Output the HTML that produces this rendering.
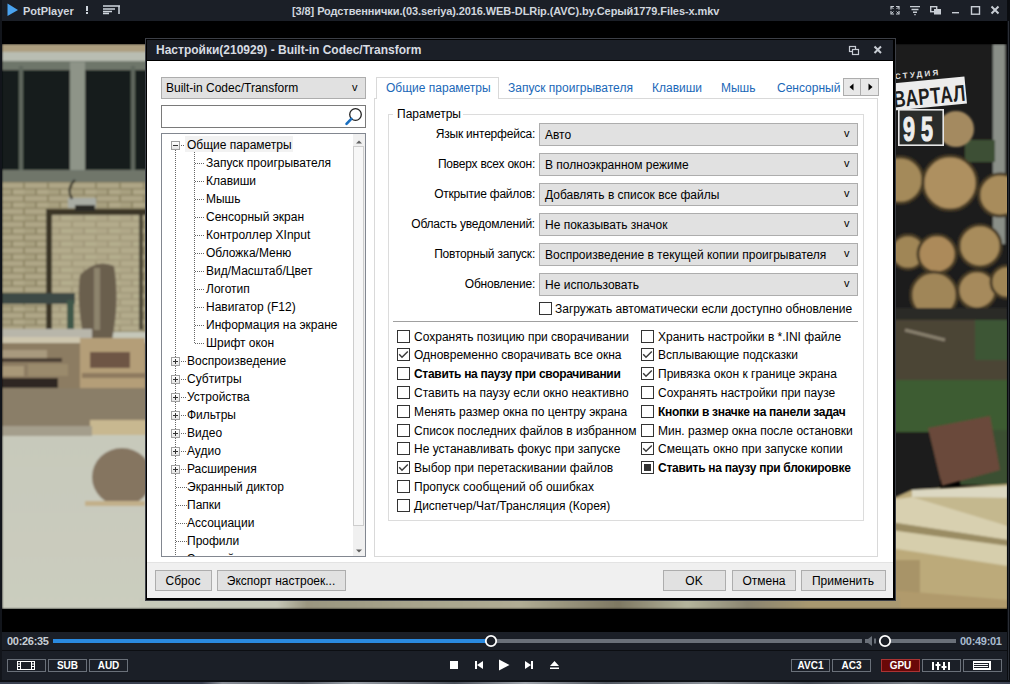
<!DOCTYPE html>
<html><head><meta charset="utf-8">
<style>
*{box-sizing:border-box;margin:0;padding:0}
html,body{width:1010px;height:684px;overflow:hidden;background:#000;font-family:"Liberation Sans",sans-serif;position:relative}
.a{position:absolute}
.t{position:absolute;white-space:nowrap;font-size:12px;color:#000;line-height:14px}
.cb{position:absolute;width:13px;height:13px;border:1px solid #333;background:#fff}
svg{display:block}
</style></head><body>

<svg class="a" style="left:0;top:0" width="1010" height="684" viewBox="0 0 1010 684">
<defs>
<filter id="bl" x="-5%" y="-5%" width="110%" height="110%"><feGaussianBlur stdDeviation="1.2"/></filter>
<pattern id="brick" width="24" height="13" patternUnits="userSpaceOnUse">
<rect width="24" height="13" fill="#8f8666"/>
<rect x="1" y="1" width="22" height="5" fill="#aea686"/>
<rect x="-11" y="7.5" width="22" height="5" fill="#a8a080"/>
<rect x="13" y="7.5" width="22" height="5" fill="#b0a888"/>
</pattern>
<linearGradient id="conc" x1="0" y1="0" x2="0" y2="1"><stop offset="0" stop-color="#bfc0b2"/><stop offset="1" stop-color="#cbcdbf"/></linearGradient>
<linearGradient id="bot" x1="0" y1="0" x2="1" y2="0"><stop offset="0" stop-color="#c8cabc"/><stop offset="0.18" stop-color="#c4c6b6"/><stop offset="0.22" stop-color="#9a9680"/><stop offset="0.36" stop-color="#a8a48c"/><stop offset="0.5" stop-color="#b0ac94"/><stop offset="0.63" stop-color="#7e7862"/><stop offset="0.72" stop-color="#b4b49c"/><stop offset="0.8" stop-color="#8a8470"/><stop offset="0.88" stop-color="#a89870"/><stop offset="1" stop-color="#a89870"/></linearGradient>
</defs>
<g filter="url(#bl)">
<!-- LEFT STRIP -->
<rect x="2" y="44" width="150" height="565" fill="url(#conc)"/>
<rect x="2" y="44" width="150" height="8" fill="#ad9f80"/>
<rect x="2" y="52" width="150" height="9" fill="#b9bdb2"/>
<rect x="2" y="61" width="150" height="9" fill="#6e766b"/>
<rect x="2" y="70" width="150" height="100" fill="#171e1b"/>
<rect x="19" y="66" width="4" height="106" fill="#5f675d"/>
<rect x="70" y="62" width="15" height="112" fill="#8e9488"/>
<rect x="131" y="66" width="4" height="106" fill="#5f675d"/>
<rect x="2" y="170" width="150" height="12" fill="#6f766a"/>
<rect x="2" y="182" width="150" height="150" fill="url(#brick)"/>
<rect x="52" y="215" width="88" height="115" fill="#bcb596" opacity="0.4"/>
<rect x="46" y="209" width="106" height="6" fill="#3a3428"/>
<rect x="46" y="209" width="6" height="125" fill="#3a3428"/>
<rect x="139" y="215" width="4" height="115" fill="#4a4436"/>
<rect x="68" y="198" width="28" height="10" fill="#a8aca4"/>
<rect x="75" y="205" width="20" height="6" fill="#2a2a26"/>
<path d="M72 199 Q66 188 75 180" stroke="#2a2a26" stroke-width="2" fill="none"/>
<rect x="2" y="293" width="73" height="11" fill="#3e4a44"/>
<rect x="67" y="300" width="7" height="30" fill="#40584a"/>
<path d="M80 275 Q96 258 114 266 Q120 300 112 340 L84 340 Q76 300 80 275Z" fill="#6a5e4e"/>
<rect x="94" y="268" width="6" height="62" fill="#9c947a" opacity="0.7"/>
<rect x="2" y="329" width="90" height="9" fill="#b8b6aa"/>
<rect x="2" y="337" width="78" height="6" fill="#cec6ae"/>
<rect x="2" y="343" width="150" height="45" fill="#8c7c62"/>
<rect x="2" y="350" width="45" height="9" fill="#a89a7e"/>
<rect x="28" y="364" width="40" height="12" fill="#9a8a6c"/>
<rect x="2" y="366" width="22" height="10" fill="#a89878"/>
<rect x="2" y="358" width="60" height="4" fill="#4a3c30"/>
<rect x="80" y="338" width="65" height="50" fill="#b49e78"/>
<rect x="90" y="352" width="40" height="16" fill="#6e5444"/>
<rect x="82" y="373" width="63" height="5" fill="#8e7a5e"/>
<rect x="2" y="378" width="56" height="10" fill="#2e2824"/>
<rect x="2" y="388" width="150" height="38" fill="#8a7e68"/>
<rect x="90" y="420" width="60" height="15" fill="#c8b890"/>
<rect x="2" y="426" width="90" height="10" fill="#a49e8c"/>
<ellipse cx="122" cy="477" rx="30" ry="29" fill="#857560"/>
<rect x="85" y="501" width="60" height="5" fill="#c2b08a"/>
<!-- RIGHT STRIP -->
<rect x="890" y="44" width="118" height="270" fill="#1b1e1a"/>
<rect x="993" y="44" width="12" height="200" fill="#8a8f88"/>
<rect x="965" y="140" width="30" height="22" fill="#3e5036"/>
<circle cx="900" cy="180" r="23" fill="#a48a5a" stroke="#4a3c28" stroke-width="3"/>
<circle cx="950" cy="183" r="27" fill="#ae9060" stroke="#4a3c28" stroke-width="3"/>
<circle cx="1000" cy="195" r="21" fill="#a88c5c" stroke="#4a3c28" stroke-width="3"/>
<circle cx="908" cy="252" r="17" fill="#a08656" stroke="#4a3c28" stroke-width="3"/>
<circle cx="937" cy="254" r="19" fill="#ac8a5a" stroke="#4a3c28" stroke-width="3"/>
<circle cx="980" cy="246" r="21" fill="#a88c5c" stroke="#4a3c28" stroke-width="3"/>
<circle cx="934" cy="295" r="23" fill="#a08658" stroke="#4a3c28" stroke-width="3"/>
<circle cx="977" cy="290" r="19" fill="#a68a5c" stroke="#4a3c28" stroke-width="3"/>
<circle cx="1007" cy="282" r="16" fill="#a08656" stroke="#4a3c28" stroke-width="3"/>
<rect x="890" y="308" width="118" height="12" fill="#2a2c28"/>
<rect x="890" y="320" width="118" height="62" fill="#4c4436"/>
<path d="M905 330 L945 340" stroke="#8a8270" stroke-width="3"/>
<rect x="975" y="320" width="33" height="40" fill="#3e5634"/>
<rect x="890" y="380" width="118" height="55" fill="#3e5c32"/>
<rect x="960" y="430" width="48" height="55" fill="#3a5030"/>
<rect x="890" y="432" width="50" height="68" fill="#1e1f1c"/>
<path d="M928 428 L990 416 L1000 470 L942 486Z" fill="#6a4a3a"/>
<path d="M890 500 L912 490 L1008 484 L1008 609 L890 609Z" fill="#bcaa7a"/>
<rect x="890" y="560" width="30" height="49" fill="#a89468"/>
<path d="M912 490 L1008 486 L1008 498 L912 497Z" fill="#dcd8c2"/>
<path d="M912 497 L1008 498 L1008 525 L912 512Z" fill="#c4b88e"/>
<path d="M890 500 L912 497 L1008 526 L1008 540 L890 522Z" fill="#d8d0b0"/>
<path d="M890 522 L1008 540 L1008 546 L890 530Z" fill="#9a8c64"/>
<path d="M890 530 L1008 546 L1008 566 L890 548Z" fill="#d6ceac"/>
<path d="M890 590 L1008 600 L1008 609 L890 609Z" fill="#b09a6c"/>
<!-- BOTTOM STRIP -->
<rect x="140" y="598" width="760" height="11" fill="url(#bot)"/>
</g>
<rect x="0" y="609" width="1010" height="23" fill="#000"/>
<rect x="0" y="21" width="1010" height="23" fill="#000"/>
<!-- logo -->
<circle cx="956" cy="129" r="18" fill="#a48a60" filter="url(#bl)"/>
<g transform="rotate(-5.5 930 95)">
<text x="897" y="76" font-family="Liberation Sans" font-weight="700" font-size="8" fill="#e4e4e4" letter-spacing="2.2">СТУДИЯ</text>
<rect x="880" y="80" width="86" height="27" fill="#ececec"/>
<text x="0" y="0" font-family="Liberation Sans" font-weight="700" font-size="23" fill="#1e1e1e" transform="translate(893 104) scale(0.74 1)" letter-spacing="1">ВАРТАЛ</text>
</g>
<rect x="898.8" y="109.8" width="44.4" height="35.4" fill="#2a2c2a" stroke="#e6e6e6" stroke-width="1.6"/>
<text x="0" y="0" font-family="Liberation Sans" font-weight="700" font-size="36" fill="#eee" stroke="#eee" stroke-width="1.2" transform="translate(903 141) scale(0.6 1)" letter-spacing="10">95</text>
</svg>

<div class="a" style="left:0px;top:0px;width:1010px;height:21px;background:#1b1f27;"></div>
<div class="a" style="left:0px;top:0px;width:2px;height:684px;background:#12151b;"></div>
<div class="a" style="left:1007px;top:0px;width:3px;height:684px;background:#0a0c10;"></div>
<div class="a" style="left:1008px;top:21px;width:1px;height:663px;background:#2a2e36;"></div>
<svg class="a" style="left:6px;top:2px" width="14" height="16" viewBox="0 0 14 16"><path d="M1.5 1.5 L12 8 L1.5 14Z" fill="#4aa3f0"/></svg>
<div class="t" style="left:23px;top:4px;font-size:11px;font-weight:700;color:#d0d6de">PotPlayer</div>
<div class="a" style="left:86px;top:6px;width:2px;height:5px;background:#d0d6de"></div>
<div class="a" style="left:86px;top:12px;width:2px;height:2px;background:#d0d6de"></div>
<svg class="a" style="left:102px;top:5px" width="19" height="10"><path d="M1 1H18M1 4H13M1 6.5H10M1 8.5H7M17 1V9" stroke="#d0d6de" stroke-width="1.5" fill="none"/></svg>
<div class="t" style="left:292px;top:4px;font-size:11px;font-weight:700;color:#d0d6de;letter-spacing:-0.09px">[3/8] Родственнички.(03.seriya).2016.WEB-DLRip.(AVC).by.Серый1779.Files-x.mkv</div>
<svg class="a" style="left:888px;top:4px" width="115" height="12" viewBox="0 0 115 12">
<g stroke="#c8cdd4" stroke-width="1.4" fill="none">
<path d="M3 5.5V2.5H6M8 2.5H11V5.5M3 7V10H6M8 10H11V7" stroke-width="1.2"/><path d="M3.5 3L5.5 5M10.5 3L8.5 5M3.5 9.5L5.5 7.5M10.5 9.5L8.5 7.5" stroke-width="1"/>
<path d="M22 2.6H32M23.5 5.5H30.5M25 8.2H29M26.3 10.6H27.7" stroke-width="1.4"/>
<rect x="42.7" y="2.7" width="6" height="5"/>
<path d="M64 8.7H71"/>
<rect x="83.5" y="2.7" width="8" height="7.5"/>
<path d="M103.5 2.5L110.5 9.5M110.5 2.5L103.5 9.5" stroke-width="2"/>
</g>
<rect x="46" y="5" width="7" height="5.5" fill="#c8cdd4"/>
</svg>

<div class="a" style="left:145px;top:38px;width:751px;height:563px;background:#000;border:1px solid #3c3f46;"></div>
<div class="a" style="left:147px;top:40px;width:746px;height:20px;background:#1b1f27;"></div>
<div class="a" style="left:147px;top:61px;width:746px;height:501px;background:#ffffff;"></div>
<div class="a" style="left:147px;top:562px;width:746px;height:36px;background:#f0f0f0;"></div>
<div class="a" style="left:147px;top:562px;width:746px;height:1px;background:#e3e3e3;"></div>
<div class="t" style="left:156px;top:43px;font-size:12px;line-height:14px;font-weight:700;color:#d8dce2;">Настройки(210929) - Built-in Codec/Transform</div>
<svg class="a" style="left:846px;top:44px" width="40" height="12" viewBox="0 0 40 12">
<g stroke="#c8cdd4" stroke-width="1.2" fill="none">
<rect x="3.5" y="2.5" width="6" height="5"/>
<rect x="6.5" y="5.5" width="6" height="5" fill="#1b1f27"/>
<path d="M28.5 2.5L35 9M35 2.5L28.5 9" stroke-width="2"/>
</g>
</svg>

<div class="a" style="left:161px;top:77px;width:205px;height:22px;background:#e1e1e1;border:1px solid #adadad;"></div>
<div class="t" style="left:166px;top:81px;font-size:12px;line-height:14px;font-weight:400;color:#000;">Built-in Codec/Transform</div>
<div class="t" style="left:352px;top:81px;font-size:11px;line-height:13px;font-weight:400;color:#000;">v</div>
<div class="a" style="left:161px;top:105px;width:205px;height:23px;background:#fff;border:1px solid #7a7a7a;"></div>
<svg class="a" style="left:344px;top:107px" width="20" height="19" viewBox="0 0 20 19">
<circle cx="11.5" cy="7.5" r="5.8" fill="none" stroke="#222" stroke-width="1.3"/>
<line x1="7.3" y1="11.8" x2="2.5" y2="16.8" stroke="#1a6fc0" stroke-width="2.6" stroke-linecap="round"/>
</svg>
<div class="a" style="left:161px;top:133px;width:205px;height:424px;background:#fff;border:1px solid #828790;"></div>
<div class="a" style="left:162px;top:134px;width:191px;height:422px;overflow:hidden">
<div class="a" style="left:13px;top:16px;width:1px;height:450px;background:repeating-linear-gradient(#666 0 1px,transparent 1px 2px)"></div>
<div class="a" style="left:32px;top:18px;width:1px;height:192px;background:repeating-linear-gradient(#666 0 1px,transparent 1px 2px)"></div>
<div class="a" style="left:9px;top:7px;width:9px;height:9px;border:1px solid #a0a0a0;background:linear-gradient(#fff,#e6e6e6)"></div>
<div class="a" style="left:11px;top:11px;width:5px;height:1px;background:#333"></div>
<div class="a" style="left:19px;top:11px;width:6px;height:1px;background:repeating-linear-gradient(90deg,#666 0 1px,transparent 1px 2px)"></div>
<div class="a" style="left:23px;top:2px;width:108px;height:16px;background:#f2f2f2"></div>
<div class="t" style="left:25px;top:4px">Общие параметры</div>
<div class="a" style="left:33px;top:29px;width:9px;height:1px;background:repeating-linear-gradient(90deg,#666 0 1px,transparent 1px 2px)"></div>
<div class="t" style="left:44px;top:22px">Запуск проигрывателя</div>
<div class="a" style="left:33px;top:47px;width:9px;height:1px;background:repeating-linear-gradient(90deg,#666 0 1px,transparent 1px 2px)"></div>
<div class="t" style="left:44px;top:40px">Клавиши</div>
<div class="a" style="left:33px;top:65px;width:9px;height:1px;background:repeating-linear-gradient(90deg,#666 0 1px,transparent 1px 2px)"></div>
<div class="t" style="left:44px;top:58px">Мышь</div>
<div class="a" style="left:33px;top:83px;width:9px;height:1px;background:repeating-linear-gradient(90deg,#666 0 1px,transparent 1px 2px)"></div>
<div class="t" style="left:44px;top:76px">Сенсорный экран</div>
<div class="a" style="left:33px;top:101px;width:9px;height:1px;background:repeating-linear-gradient(90deg,#666 0 1px,transparent 1px 2px)"></div>
<div class="t" style="left:44px;top:94px">Контроллер XInput</div>
<div class="a" style="left:33px;top:119px;width:9px;height:1px;background:repeating-linear-gradient(90deg,#666 0 1px,transparent 1px 2px)"></div>
<div class="t" style="left:44px;top:112px">Обложка/Меню</div>
<div class="a" style="left:33px;top:137px;width:9px;height:1px;background:repeating-linear-gradient(90deg,#666 0 1px,transparent 1px 2px)"></div>
<div class="t" style="left:44px;top:130px">Вид/Масштаб/Цвет</div>
<div class="a" style="left:33px;top:155px;width:9px;height:1px;background:repeating-linear-gradient(90deg,#666 0 1px,transparent 1px 2px)"></div>
<div class="t" style="left:44px;top:148px">Логотип</div>
<div class="a" style="left:33px;top:173px;width:9px;height:1px;background:repeating-linear-gradient(90deg,#666 0 1px,transparent 1px 2px)"></div>
<div class="t" style="left:44px;top:166px">Навигатор (F12)</div>
<div class="a" style="left:33px;top:191px;width:9px;height:1px;background:repeating-linear-gradient(90deg,#666 0 1px,transparent 1px 2px)"></div>
<div class="t" style="left:44px;top:184px">Информация на экране</div>
<div class="a" style="left:33px;top:209px;width:9px;height:1px;background:repeating-linear-gradient(90deg,#666 0 1px,transparent 1px 2px)"></div>
<div class="t" style="left:44px;top:202px">Шрифт окон</div>
<div class="a" style="left:9px;top:223px;width:9px;height:9px;border:1px solid #a0a0a0;background:linear-gradient(#fff,#e6e6e6)"></div>
<div class="a" style="left:11px;top:227px;width:5px;height:1px;background:#333"></div>
<div class="a" style="left:13px;top:225px;width:1px;height:5px;background:#333"></div>
<div class="a" style="left:19px;top:227px;width:6px;height:1px;background:repeating-linear-gradient(90deg,#666 0 1px,transparent 1px 2px)"></div>
<div class="t" style="left:25px;top:220px">Воспроизведение</div>
<div class="a" style="left:9px;top:241px;width:9px;height:9px;border:1px solid #a0a0a0;background:linear-gradient(#fff,#e6e6e6)"></div>
<div class="a" style="left:11px;top:245px;width:5px;height:1px;background:#333"></div>
<div class="a" style="left:13px;top:243px;width:1px;height:5px;background:#333"></div>
<div class="a" style="left:19px;top:245px;width:6px;height:1px;background:repeating-linear-gradient(90deg,#666 0 1px,transparent 1px 2px)"></div>
<div class="t" style="left:25px;top:238px">Субтитры</div>
<div class="a" style="left:9px;top:259px;width:9px;height:9px;border:1px solid #a0a0a0;background:linear-gradient(#fff,#e6e6e6)"></div>
<div class="a" style="left:11px;top:263px;width:5px;height:1px;background:#333"></div>
<div class="a" style="left:13px;top:261px;width:1px;height:5px;background:#333"></div>
<div class="a" style="left:19px;top:263px;width:6px;height:1px;background:repeating-linear-gradient(90deg,#666 0 1px,transparent 1px 2px)"></div>
<div class="t" style="left:25px;top:256px">Устройства</div>
<div class="a" style="left:9px;top:277px;width:9px;height:9px;border:1px solid #a0a0a0;background:linear-gradient(#fff,#e6e6e6)"></div>
<div class="a" style="left:11px;top:281px;width:5px;height:1px;background:#333"></div>
<div class="a" style="left:13px;top:279px;width:1px;height:5px;background:#333"></div>
<div class="a" style="left:19px;top:281px;width:6px;height:1px;background:repeating-linear-gradient(90deg,#666 0 1px,transparent 1px 2px)"></div>
<div class="t" style="left:25px;top:274px">Фильтры</div>
<div class="a" style="left:9px;top:295px;width:9px;height:9px;border:1px solid #a0a0a0;background:linear-gradient(#fff,#e6e6e6)"></div>
<div class="a" style="left:11px;top:299px;width:5px;height:1px;background:#333"></div>
<div class="a" style="left:13px;top:297px;width:1px;height:5px;background:#333"></div>
<div class="a" style="left:19px;top:299px;width:6px;height:1px;background:repeating-linear-gradient(90deg,#666 0 1px,transparent 1px 2px)"></div>
<div class="t" style="left:25px;top:292px">Видео</div>
<div class="a" style="left:9px;top:313px;width:9px;height:9px;border:1px solid #a0a0a0;background:linear-gradient(#fff,#e6e6e6)"></div>
<div class="a" style="left:11px;top:317px;width:5px;height:1px;background:#333"></div>
<div class="a" style="left:13px;top:315px;width:1px;height:5px;background:#333"></div>
<div class="a" style="left:19px;top:317px;width:6px;height:1px;background:repeating-linear-gradient(90deg,#666 0 1px,transparent 1px 2px)"></div>
<div class="t" style="left:25px;top:310px">Аудио</div>
<div class="a" style="left:9px;top:331px;width:9px;height:9px;border:1px solid #a0a0a0;background:linear-gradient(#fff,#e6e6e6)"></div>
<div class="a" style="left:11px;top:335px;width:5px;height:1px;background:#333"></div>
<div class="a" style="left:13px;top:333px;width:1px;height:5px;background:#333"></div>
<div class="a" style="left:19px;top:335px;width:6px;height:1px;background:repeating-linear-gradient(90deg,#666 0 1px,transparent 1px 2px)"></div>
<div class="t" style="left:25px;top:328px">Расширения</div>
<div class="a" style="left:14px;top:353px;width:11px;height:1px;background:repeating-linear-gradient(90deg,#666 0 1px,transparent 1px 2px)"></div>
<div class="t" style="left:25px;top:346px">Экранный диктор</div>
<div class="a" style="left:14px;top:371px;width:11px;height:1px;background:repeating-linear-gradient(90deg,#666 0 1px,transparent 1px 2px)"></div>
<div class="t" style="left:25px;top:364px">Папки</div>
<div class="a" style="left:14px;top:389px;width:11px;height:1px;background:repeating-linear-gradient(90deg,#666 0 1px,transparent 1px 2px)"></div>
<div class="t" style="left:25px;top:382px">Ассоциации</div>
<div class="a" style="left:14px;top:407px;width:11px;height:1px;background:repeating-linear-gradient(90deg,#666 0 1px,transparent 1px 2px)"></div>
<div class="t" style="left:25px;top:400px">Профили</div>
<div class="a" style="left:14px;top:425px;width:11px;height:1px;background:repeating-linear-gradient(90deg,#666 0 1px,transparent 1px 2px)"></div>
<div class="t" style="left:25px;top:418px">Эквалайзер</div>
</div>
<div class="a" style="left:353px;top:134px;width:12px;height:422px;background:#f0f0f0"></div>
<div class="a" style="left:353px;top:146px;width:11px;height:380px;background:#f7f7f7;border:1px solid #cdcdcd"></div>
<svg class="a" style="left:353px;top:135px" width="12" height="421"><path d="M3 8.5L6 5.5L9 8.5Z" fill="#606060"/><path d="M3 414.5L6 417.5L9 414.5Z" fill="#606060"/></svg>
<div class="a" style="left:374px;top:98px;width:504px;height:459px;background:#fff;border:1px solid #d9d9d9;"></div>
<div class="a" style="left:376px;top:77px;width:123px;height:22px;background:#fff;border:1px solid #d9d9d9;border-bottom:none;"></div>
<div class="t" style="left:386px;top:81px;font-size:12px;line-height:14px;font-weight:400;color:#1a68b8;">Общие параметры</div>
<div class="t" style="left:508px;top:81px;font-size:12px;line-height:14px;font-weight:400;color:#1a68b8;">Запуск проигрывателя</div>
<div class="t" style="left:652px;top:81px;font-size:12px;line-height:14px;font-weight:400;color:#1a68b8;">Клавиши</div>
<div class="t" style="left:721px;top:81px;font-size:12px;line-height:14px;font-weight:400;color:#1a68b8;">Мышь</div>
<div class="t" style="left:777px;top:81px;font-size:12px;line-height:14px;font-weight:400;color:#1a68b8;">Сенсорный</div>
<div class="a" style="left:843px;top:78px;width:18px;height:18px;background:#e8e8e8;border:1px solid #adadad;"></div>
<div class="a" style="left:860px;top:78px;width:19px;height:18px;background:#e8e8e8;border:1px solid #adadad;"></div>
<svg class="a" style="left:843px;top:78px" width="36" height="18"><path d="M10.5 5.5 L6.5 9 L10.5 12.5Z" fill="#000"/><path d="M25.5 5.5 L29.5 9 L25.5 12.5Z" fill="#000"/></svg>
<div class="a" style="left:388px;top:114px;width:476px;height:407px;background:transparent;border:1px solid #dcdcdc;"></div>
<div class="a" style="left:393px;top:108px;width:70px;height:12px;background:#fff;"></div>
<div class="t" style="left:397px;top:107px;font-size:12px;line-height:14px;font-weight:400;color:#000;">Параметры</div>
<div class="t" style="right:475px;top:127px;font-size:12px;line-height:14px;font-weight:400;color:#000;letter-spacing:-0.22px">Язык интерфейса:</div>
<div class="a" style="left:539px;top:123px;width:319px;height:23px;background:#e1e1e1;border:1px solid #adadad;"></div>
<div class="t" style="left:545px;top:128px;font-size:12px;line-height:14px;font-weight:400;color:#000;">Авто</div>
<div class="t" style="left:844px;top:127px;font-size:11px;line-height:13px;font-weight:400;color:#000;">v</div>
<div class="t" style="right:475px;top:157px;font-size:12px;line-height:14px;font-weight:400;color:#000;letter-spacing:-0.22px">Поверх всех окон:</div>
<div class="a" style="left:539px;top:153px;width:319px;height:23px;background:#e1e1e1;border:1px solid #adadad;"></div>
<div class="t" style="left:545px;top:158px;font-size:12px;line-height:14px;font-weight:400;color:#000;">В полноэкранном режиме</div>
<div class="t" style="left:844px;top:157px;font-size:11px;line-height:13px;font-weight:400;color:#000;">v</div>
<div class="t" style="right:475px;top:187px;font-size:12px;line-height:14px;font-weight:400;color:#000;letter-spacing:-0.22px">Открытие файлов:</div>
<div class="a" style="left:539px;top:183px;width:319px;height:23px;background:#e1e1e1;border:1px solid #adadad;"></div>
<div class="t" style="left:545px;top:188px;font-size:12px;line-height:14px;font-weight:400;color:#000;">Добавлять в список все файлы</div>
<div class="t" style="left:844px;top:187px;font-size:11px;line-height:13px;font-weight:400;color:#000;">v</div>
<div class="t" style="right:475px;top:217px;font-size:12px;line-height:14px;font-weight:400;color:#000;letter-spacing:-0.22px">Область уведомлений:</div>
<div class="a" style="left:539px;top:213px;width:319px;height:23px;background:#e1e1e1;border:1px solid #adadad;"></div>
<div class="t" style="left:545px;top:218px;font-size:12px;line-height:14px;font-weight:400;color:#000;">Не показывать значок</div>
<div class="t" style="left:844px;top:217px;font-size:11px;line-height:13px;font-weight:400;color:#000;">v</div>
<div class="t" style="right:475px;top:247px;font-size:12px;line-height:14px;font-weight:400;color:#000;letter-spacing:-0.22px">Повторный запуск:</div>
<div class="a" style="left:539px;top:243px;width:319px;height:23px;background:#e1e1e1;border:1px solid #adadad;"></div>
<div class="t" style="left:545px;top:248px;font-size:12px;line-height:14px;font-weight:400;color:#000;">Воспроизведение в текущей копии проигрывателя</div>
<div class="t" style="left:844px;top:247px;font-size:11px;line-height:13px;font-weight:400;color:#000;">v</div>
<div class="t" style="right:475px;top:277px;font-size:12px;line-height:14px;font-weight:400;color:#000;letter-spacing:-0.22px">Обновление:</div>
<div class="a" style="left:539px;top:273px;width:319px;height:23px;background:#e1e1e1;border:1px solid #adadad;"></div>
<div class="t" style="left:545px;top:278px;font-size:12px;line-height:14px;font-weight:400;color:#000;">Не использовать</div>
<div class="t" style="left:844px;top:277px;font-size:11px;line-height:13px;font-weight:400;color:#000;">v</div>
<div class="cb" style="left:539px;top:302px"></div>
<div class="t" style="left:555px;top:302px;font-size:12px;line-height:14px;font-weight:400;color:#000;">Загружать автоматически если доступно обновление</div>
<div class="a" style="left:393px;top:321px;width:465px;height:1px;background:#a0a0a0;"></div>
<div class="cb" style="left:397px;top:330px"></div>
<div class="t" style="left:414px;top:330px;font-size:12px;line-height:14px;font-weight:400;color:#000;">Сохранять позицию при сворачивании</div>
<div class="cb" style="left:397px;top:348px"></div>
<svg class="a" style="left:397px;top:348px" width="13" height="13"><path d="M2.2 6.3 L5 9.3 L10.8 3.4" fill="none" stroke="#3a3a3a" stroke-width="1.4"/></svg>
<div class="t" style="left:414px;top:348px;font-size:12px;line-height:14px;font-weight:400;color:#000;">Одновременно сворачивать все окна</div>
<div class="cb" style="left:397px;top:367px"></div>
<div class="t" style="left:414px;top:367px;font-size:12px;line-height:14px;font-weight:700;color:#000;letter-spacing:-0.3px">Ставить на паузу при сворачивании</div>
<div class="cb" style="left:397px;top:386px"></div>
<div class="t" style="left:414px;top:386px;font-size:12px;line-height:14px;font-weight:400;color:#000;">Ставить на паузу если окно неактивно</div>
<div class="cb" style="left:397px;top:405px"></div>
<div class="t" style="left:414px;top:405px;font-size:12px;line-height:14px;font-weight:400;color:#000;">Менять размер окна по центру экрана</div>
<div class="cb" style="left:397px;top:424px"></div>
<div class="t" style="left:414px;top:424px;font-size:12px;line-height:14px;font-weight:400;color:#000;">Список последних файлов в избранном</div>
<div class="cb" style="left:397px;top:442px"></div>
<div class="t" style="left:414px;top:442px;font-size:12px;line-height:14px;font-weight:400;color:#000;">Не устанавливать фокус при запуске</div>
<div class="cb" style="left:397px;top:461px"></div>
<svg class="a" style="left:397px;top:461px" width="13" height="13"><path d="M2.2 6.3 L5 9.3 L10.8 3.4" fill="none" stroke="#3a3a3a" stroke-width="1.4"/></svg>
<div class="t" style="left:414px;top:461px;font-size:12px;line-height:14px;font-weight:400;color:#000;">Выбор при перетаскивании файлов</div>
<div class="cb" style="left:397px;top:480px"></div>
<div class="t" style="left:414px;top:480px;font-size:12px;line-height:14px;font-weight:400;color:#000;">Пропуск сообщений об ошибках</div>
<div class="cb" style="left:397px;top:499px"></div>
<div class="t" style="left:414px;top:499px;font-size:12px;line-height:14px;font-weight:400;color:#000;">Диспетчер/Чат/Трансляция (Корея)</div>
<div class="cb" style="left:641px;top:330px"></div>
<div class="t" style="left:658px;top:330px;font-size:12px;line-height:14px;font-weight:400;color:#000;">Хранить настройки в *.INI файле</div>
<div class="cb" style="left:641px;top:348px"></div>
<svg class="a" style="left:641px;top:348px" width="13" height="13"><path d="M2.2 6.3 L5 9.3 L10.8 3.4" fill="none" stroke="#3a3a3a" stroke-width="1.4"/></svg>
<div class="t" style="left:658px;top:348px;font-size:12px;line-height:14px;font-weight:400;color:#000;">Всплывающие подсказки</div>
<div class="cb" style="left:641px;top:367px"></div>
<svg class="a" style="left:641px;top:367px" width="13" height="13"><path d="M2.2 6.3 L5 9.3 L10.8 3.4" fill="none" stroke="#3a3a3a" stroke-width="1.4"/></svg>
<div class="t" style="left:658px;top:367px;font-size:12px;line-height:14px;font-weight:400;color:#000;">Привязка окон к границе экрана</div>
<div class="cb" style="left:641px;top:386px"></div>
<div class="t" style="left:658px;top:386px;font-size:12px;line-height:14px;font-weight:400;color:#000;">Сохранять настройки при паузе</div>
<div class="cb" style="left:641px;top:405px"></div>
<div class="t" style="left:658px;top:405px;font-size:12px;line-height:14px;font-weight:700;color:#000;letter-spacing:-0.28px">Кнопки в значке на панели задач</div>
<div class="cb" style="left:641px;top:424px"></div>
<div class="t" style="left:658px;top:424px;font-size:12px;line-height:14px;font-weight:400;color:#000;">Мин. размер окна после остановки</div>
<div class="cb" style="left:641px;top:442px"></div>
<svg class="a" style="left:641px;top:442px" width="13" height="13"><path d="M2.2 6.3 L5 9.3 L10.8 3.4" fill="none" stroke="#3a3a3a" stroke-width="1.4"/></svg>
<div class="t" style="left:658px;top:442px;font-size:12px;line-height:14px;font-weight:400;color:#000;">Смещать окно при запуске копии</div>
<div class="cb" style="left:641px;top:461px"></div>
<div class="a" style="left:644px;top:464px;width:7px;height:7px;background:#333"></div>
<div class="t" style="left:658px;top:461px;font-size:12px;line-height:14px;font-weight:700;color:#000;letter-spacing:-0.28px">Ставить на паузу при блокировке</div>
<div class="a" style="left:155px;top:570px;width:57px;height:21px;background:#e1e1e1;border:1px solid #adadad;"></div>
<div class="t" style="left:-17px;width:400px;text-align:center;top:574px;font-size:12px;line-height:14px;font-weight:400;color:#000;">Сброс</div>
<div class="a" style="left:217px;top:570px;width:129px;height:21px;background:#e1e1e1;border:1px solid #adadad;"></div>
<div class="t" style="left:81px;width:400px;text-align:center;top:574px;font-size:12px;line-height:14px;font-weight:400;color:#000;">Экспорт настроек...</div>
<div class="a" style="left:663px;top:570px;width:63px;height:21px;background:#e1e1e1;border:1px solid #adadad;"></div>
<div class="t" style="left:494px;width:400px;text-align:center;top:574px;font-size:12px;line-height:14px;font-weight:400;color:#000;">OK</div>
<div class="a" style="left:732px;top:570px;width:64px;height:21px;background:#e1e1e1;border:1px solid #adadad;"></div>
<div class="t" style="left:564px;width:400px;text-align:center;top:574px;font-size:12px;line-height:14px;font-weight:400;color:#000;">Отмена</div>
<div class="a" style="left:801px;top:570px;width:85px;height:21px;background:#e1e1e1;border:1px solid #adadad;"></div>
<div class="t" style="left:643px;width:400px;text-align:center;top:574px;font-size:12px;line-height:14px;font-weight:400;color:#000;">Применить</div>
<div class="a" style="left:2px;top:632px;width:1005px;height:18px;background:#1b1f27"></div>
<div class="a" style="left:2px;top:650px;width:1005px;height:1px;background:#0c0e12"></div>
<div class="a" style="left:2px;top:651px;width:1005px;height:29px;background:#1b1f27"></div>
<div class="a" style="left:0px;top:680px;width:1010px;height:4px;background:#10131a"></div>
<div class="t" style="left:7px;top:634px;font-size:11px;font-weight:700;color:#c8ced6;letter-spacing:-0.3px">00:26:35</div>
<div class="a" style="left:53px;top:639px;width:438px;height:4px;background:#2a8ae0"></div>
<div class="a" style="left:491px;top:639px;width:371px;height:4px;background:#6a7079"></div>
<div class="a" style="left:885px;top:639px;width:71px;height:4px;background:#6a7079"></div>
<svg class="a" style="left:484px;top:634px" width="14" height="14"><circle cx="7" cy="7" r="5.2" fill="#1b1f27" stroke="#fff" stroke-width="1.8"/></svg>
<svg class="a" style="left:878px;top:634px" width="14" height="14"><circle cx="7" cy="7" r="5.2" fill="#1b1f27" stroke="#fff" stroke-width="1.8"/></svg>
<svg class="a" style="left:865px;top:636px" width="12" height="10"><path d="M0 3H3L7 0V10L3 7H0Z" fill="#6a7079"/><rect x="9" y="2.5" width="2" height="5" fill="#6a7079"/></svg>
<div class="t" style="left:960px;top:634px;font-size:11px;font-weight:700;color:#a9bccf;letter-spacing:-0.3px">00:49:01</div>
<!-- left buttons -->
<div class="a" style="left:7px;top:659px;width:39px;height:13px;border:1px solid #6a7079"></div>
<svg class="a" style="left:17px;top:661px" width="19" height="9"><rect x="0.5" y="0.5" width="17" height="8" fill="none" stroke="#fff"/><path d="M3.5 0.5V8.5M14.5 0.5V8.5M0.5 3H3.5M0.5 5.5H3.5M14.5 3H17.5M14.5 5.5H17.5" stroke="#fff"/></svg>
<div class="a" style="left:48px;top:659px;width:39px;height:13px;border:1px solid #6a7079"></div>
<div class="t" style="left:48px;top:659px;width:39px;text-align:center;font-size:10px;font-weight:700;color:#fff;line-height:13px">SUB</div>
<div class="a" style="left:89px;top:659px;width:39px;height:13px;border:1px solid #6a7079"></div>
<div class="t" style="left:89px;top:659px;width:39px;text-align:center;font-size:10px;font-weight:700;color:#fff;line-height:13px">AUD</div>
<!-- transport -->
<svg class="a" style="left:445px;top:656px" width="120" height="20">
<rect x="5" y="5" width="8" height="8" fill="#fff"/>
<path d="M30 5H32V13H30Z M32 9L38 5V13Z" fill="#fff"/>
<path d="M54 3.5L64.5 9L54 14.5Z" fill="#fff"/>
<path d="M80 5L86 9L80 13Z M86 5H88V13H86Z" fill="#fff"/>
<path d="M105 10L109.5 5L114 10Z M105 11.5H114V13H105Z" fill="#fff"/>
</svg>
<!-- right buttons -->
<div class="a" style="left:791px;top:659px;width:39px;height:13px;border:1px solid #6a7079"></div>
<div class="t" style="left:791px;top:659px;width:39px;text-align:center;font-size:10px;font-weight:700;color:#fff;line-height:13px">AVC1</div>
<div class="a" style="left:832px;top:659px;width:39px;height:13px;border:1px solid #6a7079"></div>
<div class="t" style="left:832px;top:659px;width:39px;text-align:center;font-size:10px;font-weight:700;color:#fff;line-height:13px">AC3</div>
<div class="a" style="left:881px;top:659px;width:39px;height:13px;border:1px solid #a33;background:#6a0808"></div>
<div class="t" style="left:881px;top:659px;width:39px;text-align:center;font-size:10px;font-weight:700;color:#fff;line-height:13px">GPU</div>
<div class="a" style="left:922px;top:659px;width:39px;height:13px;border:1px solid #6a7079"></div>
<svg class="a" style="left:932px;top:661px" width="19" height="9"><rect x="0" y="1" width="2" height="8" fill="#fff"/><rect x="16" y="1" width="2" height="8" fill="#fff"/><rect x="5" y="1" width="2" height="8" fill="#fff"/><rect x="11" y="1" width="2" height="8" fill="#fff"/><rect x="3.5" y="3" width="5" height="2" fill="#fff"/><rect x="9.5" y="5" width="5" height="2" fill="#fff"/></svg>
<div class="a" style="left:963px;top:659px;width:39px;height:13px;border:1px solid #6a7079"></div>
<svg class="a" style="left:973px;top:661px" width="19" height="9"><rect x="0" y="0" width="18" height="2" fill="#fff"/><rect x="16" y="0" width="2" height="9" fill="#fff"/><rect x="0" y="0" width="1" height="9" fill="#fff"/><rect x="0" y="3" width="15" height="1" fill="#fff"/><rect x="0" y="5" width="15" height="1" fill="#fff"/><rect x="0" y="7" width="18" height="2" fill="#fff"/></svg>
<div class="a" style="left:0;top:680px;width:1010px;height:2px;background:#0e1116"></div>
<div class="a" style="left:0;top:682px;width:1010px;height:2px;background:linear-gradient(90deg,#3a4050 0,#3a4050 20%,#8a8f98 22%,#5a606a 30%,#9aa0a8 35%,#4a505a 45%,#a0a5ac 52%,#505660 60%,#8a9098 70%,#454b55 80%,#7a8088 90%,#3a4050 100%)"></div>

</body></html>
